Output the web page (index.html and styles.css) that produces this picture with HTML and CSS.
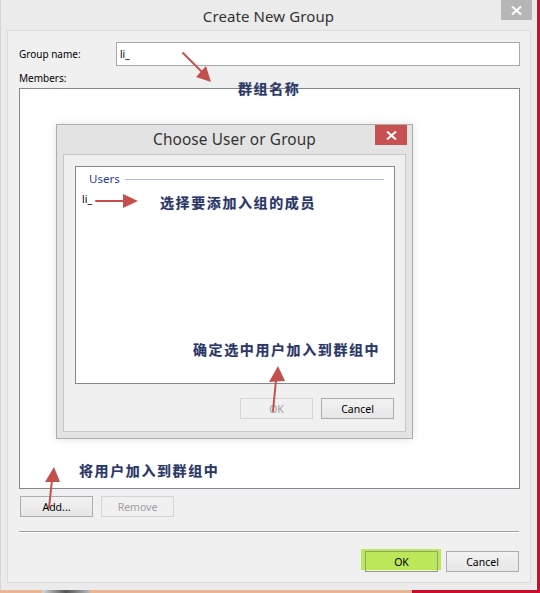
FILE: index.html
```html
<!DOCTYPE html>
<html>
<head>
<meta charset="utf-8">
<link rel="stylesheet" href="styles.css">
</head>
<body>
<div class="screen">
  <div class="window">
    <div class="titlebar">
      <span class="title">Create New Group</span>
      <div class="close close-gray">
        <svg width="11" height="9" viewBox="0 0 11 9"><path d="M1 0.5 L10 8.5 M10 0.5 L1 8.5" stroke="#fff" stroke-width="2"/></svg>
      </div>
    </div>
    <div class="panel">
      <div class="name-row">
        <span class="lbl">Group name:</span>
        <div class="input">li_</div>
      </div>
      <div class="lbl members">Members:</div>
      <div class="listbox">
        <div class="dialog">
          <div class="titlebar dlg-title">
            <span class="title dlg-title-text">Choose User or Group</span>
            <div class="close close-red">
              <svg width="11" height="9" viewBox="0 0 11 9"><path d="M1 0.5 L10 8.5 M10 0.5 L1 8.5" stroke="#fff" stroke-width="2"/></svg>
            </div>
          </div>
          <div class="dlg-panel">
            <div class="userbox">
              <div class="group-head"><span class="group-label">Users</span><span class="group-line"></span></div>
              <div class="user-item">li_</div>
            </div>
            <div class="btn-row end">
              <button class="btn disabled">OK</button>
              <button class="btn">Cancel</button>
            </div>
          </div>
        </div>
      </div>
      <div class="btn-row start">
        <button class="btn">Add...</button>
        <button class="btn disabled">Remove</button>
      </div>
      <div class="sep"></div>
      <div class="btn-row end">
        <span class="ok-wrap"><span class="highlight"></span><button class="btn btn-hl">OK</button></span>
        <button class="btn">Cancel</button>
      </div>
    </div>
  </div>
  <div class="edge-red"></div>
</div>
<div class="bottom-strip"><div class="peach"><span class="blob"></span></div><div class="red-bottom"></div></div>

<div class="notes">
  <span class="note n1">群组名称</span>
  <span class="note n2">选择要添加入组的成员</span>
  <span class="note n3">确定选中用户加入到群组中</span>
  <span class="note n4">将用户加入到群组中</span>
  <svg class="arrows" width="540" height="593" viewBox="0 0 540 593">
    <g fill="#c4504e" stroke="#c4504e" stroke-width="2" stroke-linecap="round">
      <line x1="183" y1="53" x2="203" y2="73"/>
      <polygon stroke="none" points="211,82 196,77 206,66"/>
      <line x1="96" y1="201" x2="125" y2="201"/>
      <polygon stroke="none" points="138,201 123,194 123,208"/>
      <line x1="276" y1="380" x2="273" y2="411"/>
      <polygon stroke="none" points="278,366 269,382 285,381"/>
      <line x1="52" y1="480" x2="49" y2="508"/>
      <polygon stroke="none" points="54,467 45,482 60,482"/>
    </g>
  </svg>
</div>
</body>
</html>
```

FILE: styles.css
```css
* { box-sizing: border-box; }
html, body { margin: 0; padding: 0; }
body {
  width: 540px;
  height: 593px;
  overflow: hidden;
  background: #c8102e;
  font-family: "Noto Sans", "Open Sans", sans-serif;
  font-size: 10px;
  color: #000;
  position: relative;
}
.screen {
  display: flex;
  height: 590px;
}
.window {
  width: 537px;
  height: 590px;
  background: #ebebeb;
  border-left: 1px solid #d6d6d6;
  border-right: 1px solid #f4f4f4;
  display: flex;
  flex-direction: column;
}
.edge-red { width: 3px; background: #c8102e; }
.bottom-strip { display: flex; height: 3px; }
.peach { width: 412px; background: #e9b796; position: relative; }
.blob { position: absolute; left: 42px; top: 0; width: 48px; height: 3px; background: linear-gradient(90deg, #d8d8d8, #555 50%, #bbb); }
.red-bottom { flex: 1; background: #c8102e; }

.titlebar {
  display: grid;
  grid-template-columns: 1fr auto 1fr;
  height: 30px;
  align-items: start;
}
.title {
  grid-column: 2;
  font-size: 15px;
  color: #333;
  line-height: 30px;
  padding-top: 1px;
  letter-spacing: 0.1px;
}
.close {
  grid-column: 3;
  justify-self: end;
  display: flex;
  align-items: center;
  justify-content: center;
  width: 31px;
  height: 20px;
}
.close-gray { background: #b6b6b6; margin-right: 4px; }
.close-red { background: #c75050; margin-right: 5px; width: 32px; }

.panel {
  margin: 0 5px 7px 6px;
  flex: 1;
  background: #f0f0f0;
  border: 1px solid #dcdcdc;
  padding: 11px 10px 0 11px;
  display: flex;
  flex-direction: column;
}
.name-row {
  display: flex;
  align-items: center;
  height: 24px;
}
.lbl { line-height: 16px; }
.name-row .lbl { width: 97px; }
.input {
  flex: 1;
  height: 24px;
  background: #fff;
  border: 1px solid #a9a9a9;
  padding: 3px 3px;
  line-height: 16px;
}
.members { margin-top: 4px; height: 16px; margin-bottom: 2px; }
.listbox {
  height: 401px;
  background: #fff;
  border: 1px solid #828790;
  position: relative;
}
.btn-row { display: flex; gap: 8px; }
.btn-row.start { margin-top: 7px; padding-left: 1px; }
.btn-row.end { justify-content: flex-end; padding-right: 1px; }
.panel > .btn-row.end { margin-top: 18px; }
.btn {
  width: 73px;
  height: 21px;
  font-family: inherit;
  font-size: 10.5px;
  color: #000;
  background: linear-gradient(#f2f2f2, #e6e6e6);
  border: 1px solid #adadad;
  border-radius: 0;
  padding: 0;
  line-height: 18px;
}
.btn.disabled {
  background: #f0f0f0;
  border-color: #d5d5d5;
  color: #a0a0a0;
}
.sep {
  margin-top: 14px;
  width: 500px;
  height: 2px;
  border-top: 1px solid #a0a0a0;
  border-bottom: 1px solid #fff;
}
.ok-wrap { position: relative; display: flex; }
.highlight {
  position: absolute;
  left: -4px;
  top: -2px;
  width: 80px;
  height: 21px;
  background: #bce75a;
}
.btn.btn-hl {
  position: relative;
  background: transparent;
  border-color: #8fa66a;
}

/* inner dialog */
.dialog {
  position: absolute;
  left: 36px;
  top: 35px;
  width: 357px;
  height: 315px;
  background: #e3e3e3;
  border: 1px solid #adadad;
  box-shadow: 0 0 8px rgba(0,0,0,0.12);
  display: flex;
  flex-direction: column;
}
.dlg-title { height: 29px; }
.dlg-title-text { font-size: 15.4px; line-height: 29px; padding-top: 0; }
.dlg-panel {
  margin: 0 6px 6px 6px;
  flex: 1;
  background: #f0f0f0;
  border: 1px solid #c6c6c6;
  padding: 11px 10px 0 11px;
  display: flex;
  flex-direction: column;
}
.userbox {
  height: 218px;
  background: #fff;
  border: 1px solid #828790;
  padding: 4px 10px 0 6px;
}
.group-head { display: flex; align-items: center; height: 16px; }
.group-label { color: #2e3a9e; font-size: 11.5px; margin-left: 7px; margin-right: 5px; line-height: 16px; }
.group-line { flex: 1; height: 1px; background: #aebde0; }
.user-item { margin-top: 4px; margin-left: 0px; line-height: 16px; font-size: 10.5px; }
.dlg-panel .btn-row.end { margin-top: 14px; }

/* annotations */
.notes { position: absolute; left: 0; top: 0; width: 540px; height: 593px; pointer-events: none; }
.arrows { position: absolute; left: 0; top: 0; }
.note {
  position: absolute;
  font-family: "Noto Sans CJK SC", sans-serif;
  font-weight: 700;
  font-size: 14px;
  line-height: 16px;
  letter-spacing: 1.6px;
  color: #2b3766;
  white-space: nowrap;
  text-shadow: 0 0 1px rgba(43,55,102,0.4);
}
.n1 { left: 238px; top: 80px; }
.n2 { left: 160px; top: 194px; }
.n3 { left: 193px; top: 341px; }
.n4 { left: 79px; top: 462px; }
```
